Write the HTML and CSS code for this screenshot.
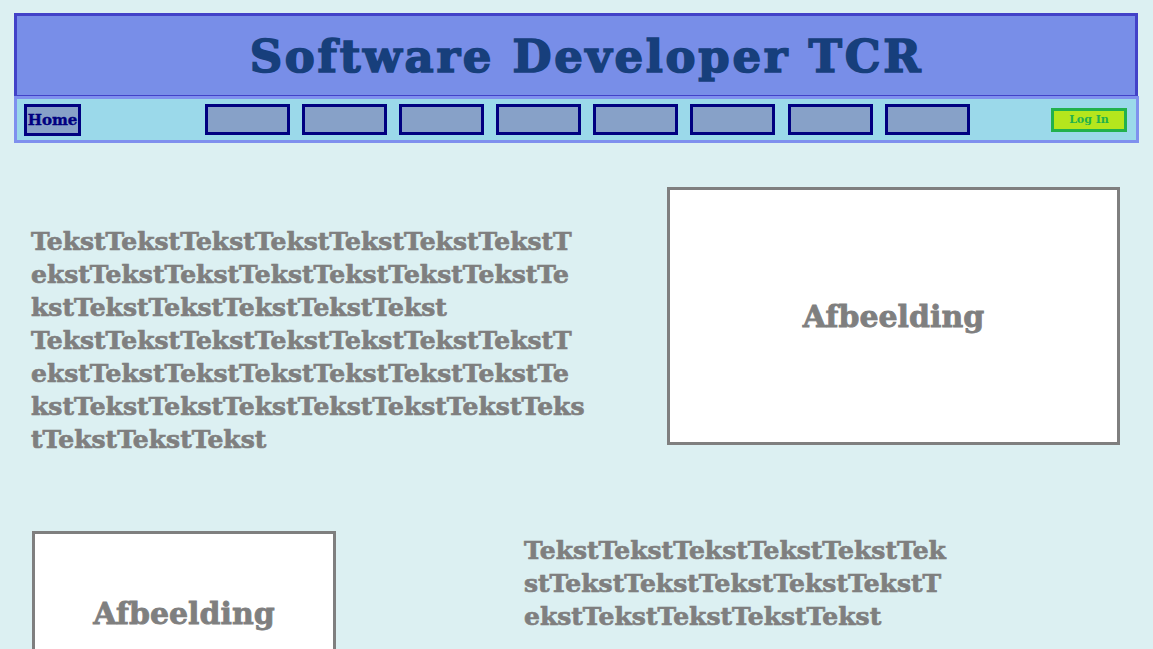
FILE: index.html
```html
<!DOCTYPE html>
<html lang="nl">
<head>
<meta charset="utf-8">
<title>Software Developer TCR</title>
<link rel="stylesheet" href="styles.css">
</head>
<body>
<header class="site-header">
  <h1 class="site-title">Software Developer TCR</h1>
</header>
<nav class="site-nav">
  <a class="nav-home" href="#">Home</a>
  <div class="nav-items">
    <a class="nav-item" href="#"></a>
    <a class="nav-item" href="#"></a>
    <a class="nav-item" href="#"></a>
    <a class="nav-item" href="#"></a>
    <a class="nav-item" href="#"></a>
    <a class="nav-item" href="#"></a>
    <a class="nav-item" href="#"></a>
    <a class="nav-item" href="#"></a>
  </div>
  <a class="nav-login" href="#">Log In</a>
</nav>
<main class="content">
  <section class="row row-first">
    <div class="text text-first">
      <p>TekstTekstTekstTekstTekstTekstTekstTekstTekstTekstTekstTekstTekstTekstTekstTekstTekstTekstTekstTekst</p>
      <p>TekstTekstTekstTekstTekstTekstTekstTekstTekstTekstTekstTekstTekstTekstTekstTekstTekstTekstTekstTekstTekstTekstTekstTekstTekst</p>
    </div>
    <div class="picture picture-first"><span>Afbeelding</span></div>
  </section>
  <section class="row row-second">
    <div class="picture picture-second"><span>Afbeelding</span></div>
    <div class="text text-second">
      <p>TekstTekstTekstTekstTekstTekstTekstTekstTekstTekstTekstTekstTekstTekstTekstTekst</p>
    </div>
  </section>
</main>
</body>
</html>
```
FILE: styles.css
```css
html, body {
  margin: 0;
  padding: 0;
}
body {
  background: #dcf0f2;
  font-family: "DejaVu Serif", "Liberation Serif", serif;
  overflow: hidden;
  height: 649px;
}
.site-header {
  margin: 13px 15px 0 14px;
  height: 79px;
  border: 3px solid #4242c8;
  background: #788ee8;
  display: flex;
  align-items: center;
  justify-content: center;
}
.site-title {
  margin: 0;
  color: #173f7c;
  font-size: 45px;
  font-weight: bold;
  letter-spacing: 2.7px;
  line-height: 1;
  padding: 2px 0 0 21px;
  -webkit-text-stroke: 1.6px #173f7c;
}
.site-nav {
  margin: -2px 14px 0 14px;
  height: 41px;
  border: 3px solid #7f90ee;
  background: #9bd9ea;
  display: flex;
  align-items: center;
  padding: 0 9px 0 7px;
}
.nav-home {
  box-sizing: border-box;
  width: 57px;
  height: 32px;
  border: 3px solid #000080;
  background: #87a1c8;
  color: #000080;
  font-weight: bold;
  font-size: 15px;
  text-decoration: none;
  display: flex;
  align-items: center;
  justify-content: center;
  margin-top: 1px;
  -webkit-text-stroke: 0.4px #000080;
}
.nav-items {
  display: flex;
  gap: 12.1px;
  margin-left: 124px;
}
.nav-item {
  box-sizing: border-box;
  width: 85px;
  height: 31px;
  border: 3px solid #000080;
  background: #87a1c8;
}
.nav-login {
  margin-left: auto;
  box-sizing: border-box;
  width: 76px;
  height: 24px;
  border: 3px solid #22b14c;
  background: #b5e61d;
  color: #22b14c;
  font-weight: bold;
  font-size: 11px;
  text-decoration: none;
  display: flex;
  align-items: center;
  justify-content: center;
}
.row {
  display: flex;
}
.row-first {
  margin-top: 44px;
  padding: 0 33px 0 31px;
  align-items: flex-start;
}
.text {
  color: #7f7f7f;
  font-weight: bold;
  font-size: 25px;
  line-height: 33px;
  word-break: break-all;
  -webkit-text-stroke: 0.7px #7f7f7f;
}
.text p {
  margin: 0;
}
.text-first {
  flex: none;
  width: 553.6px;
  margin-top: 38px;
}
.picture {
  box-sizing: border-box;
  background: #ffffff;
  border: 3px solid #7f7f7f;
  display: flex;
  align-items: center;
  justify-content: center;
  color: #7f7f7f;
  font-weight: bold;
  font-size: 30px;
  -webkit-text-stroke: 0.8px #7f7f7f;
}
.picture-first {
  margin-left: auto;
  width: 453px;
  height: 258px;
}
.row-second {
  margin-top: 75px;
  padding-left: 32px;
}
.picture-second {
  width: 304px;
  height: 164px;
}
.text-second {
  width: 426px;
  margin-left: 188px;
  margin-top: 3px;
}
```
